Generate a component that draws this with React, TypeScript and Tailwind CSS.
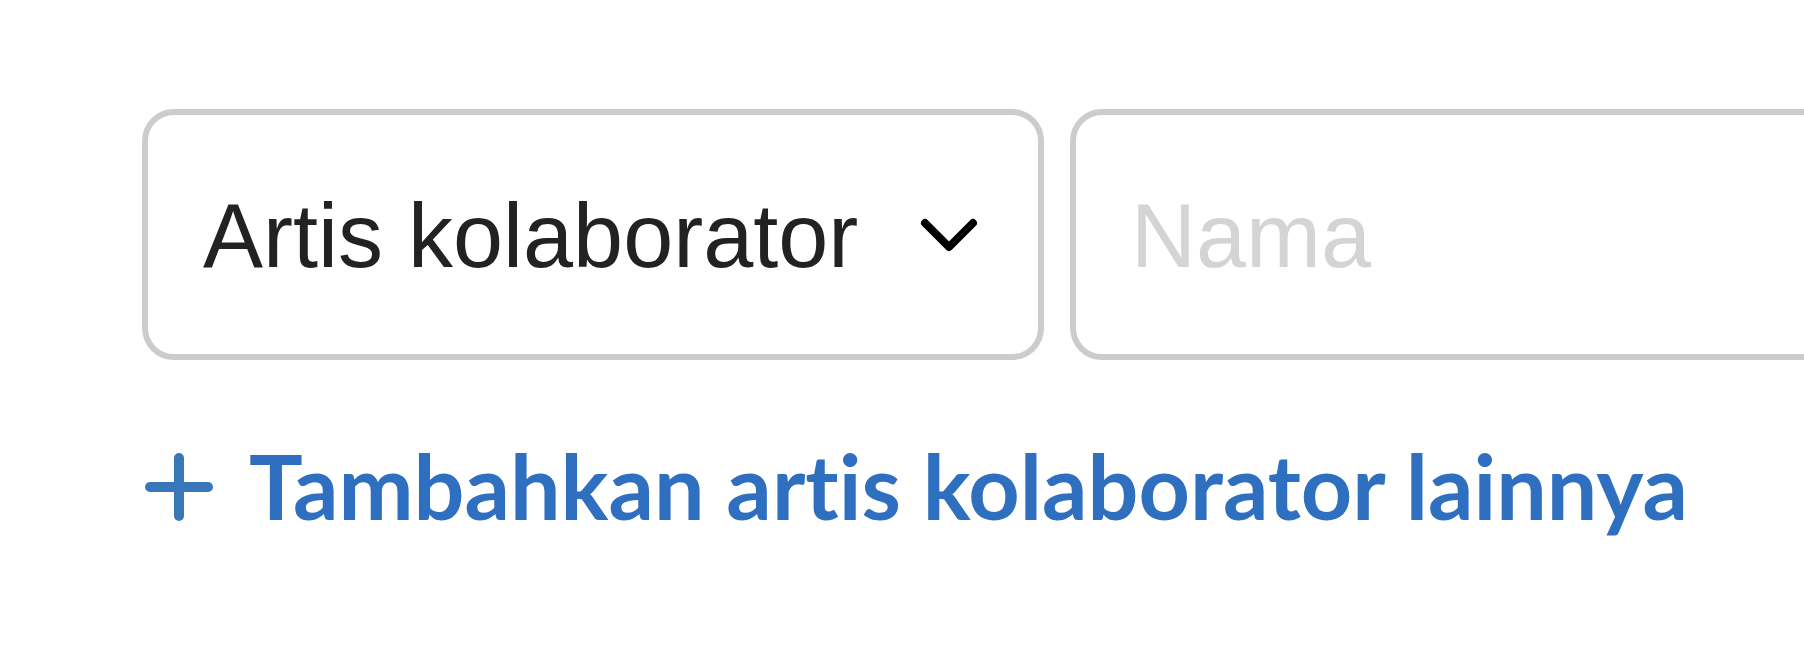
import React from "react";

export default function App() {
  return (
    <div className="w-[1804px] h-[666px] overflow-hidden bg-white pl-[142px] pt-[109px]">
      <div className="flex gap-[26px]">
        <div className="w-[902px] h-[251px] shrink-0 border-[6px] border-[#cccccc] rounded-[32px] flex items-center justify-between pl-[55px] pr-[60px]">
          <span className="font-['Liberation_Sans',Arial,sans-serif] text-[90px] text-[#222222] whitespace-nowrap pt-[3px]">
            Artis kolaborator
          </span>
          <svg width="58" height="34" viewBox="0 0 58 34" fill="none" className="shrink-0">
            <path d="M5 5 L29 29 L53 5" stroke="#000000" strokeWidth="8" strokeLinecap="round" strokeLinejoin="round" />
          </svg>
        </div>
        <div className="w-[902px] h-[251px] shrink-0 border-[6px] border-[#cccccc] rounded-[32px] flex items-center pl-[55px]">
          <span className="font-['Liberation_Sans',Arial,sans-serif] text-[90px] text-[#d4d4d4] whitespace-nowrap pt-[3px]">
            Nama
          </span>
        </div>
      </div>
      <div className="flex items-center mt-[81px] gap-[36px]">
        <svg width="68" height="68" viewBox="0 0 68 68" fill="none" className="shrink-0 ml-[3px] mt-[3px]">
          <path d="M5 34 H63 M34 5 V63" stroke="#3878b9" strokeWidth="10" strokeLinecap="round" />
        </svg>
        <span className="font-['Lato',sans-serif] font-bold text-[89.7px] leading-none text-[#2f6fc0] whitespace-nowrap [font-variant-ligatures:none]">
          Tambahkan artis kolaborator lainnya
        </span>
      </div>
    </div>
  );
}
